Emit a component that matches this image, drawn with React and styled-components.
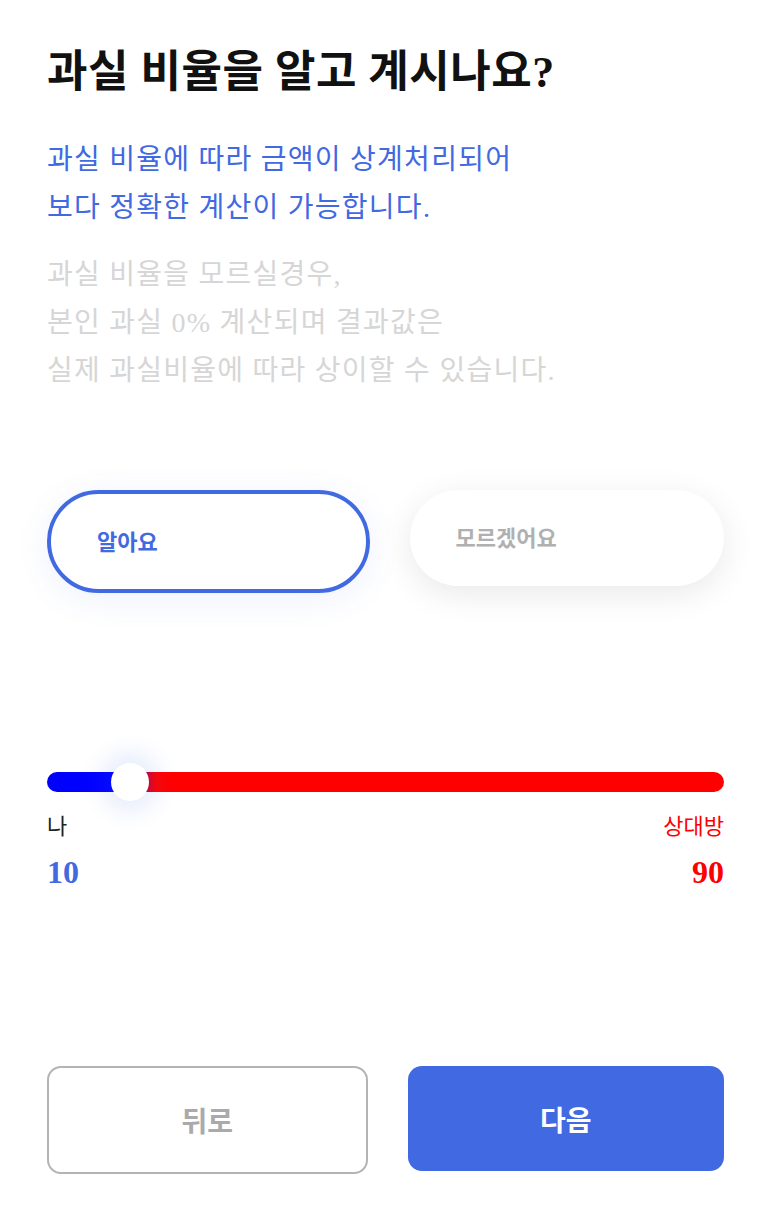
import React, { useState } from "react";
import styled, { createGlobalStyle } from "styled-components";

const Global = createGlobalStyle`
  html, body { margin: 0; padding: 0; background: #fff; }
  body { font-family: "Liberation Serif", "Noto Sans CJK KR", serif; }
  * { box-sizing: border-box; }
`;

const Page = styled.div`
  width: 773px;
  padding: 48px 49px 0 47px;
  display: flex;
  flex-direction: column;
`;

const Title = styled.h1`
  margin: 0;
  font-size: 44px;
  line-height: 50px;
  font-weight: 700;
  color: #111;
  letter-spacing: 0.5px;
`;

const Lead = styled.p`
  margin: ${(p) => p.$top} 0 0;
  font-size: 28px;
  line-height: 48px;
  font-weight: 400;
  letter-spacing: 1.25px;
  color: ${(p) => p.$color};
`;

const ChoiceRow = styled.div`
  margin-top: 95px;
  display: flex;
  gap: 40px;
  align-items: flex-start;
`;

const Choice = styled.button`
  flex: 1;
  height: ${(p) => (p.$active ? "103px" : "96px")};
  border-radius: 52px;
  border: ${(p) => (p.$active ? "4px solid #4169e1" : "none")};
  background: #fff;
  box-shadow: ${(p) =>
    p.$active
      ? "0 6px 34px rgba(65, 105, 225, 0.09)"
      : "0 8px 34px rgba(0, 0, 0, 0.09)"};
  padding: 0 0 4px 46px;
  text-align: left;
  font-family: inherit;
  font-size: 22px;
  font-weight: 700;
  color: ${(p) => (p.$active ? "#4169e1" : "#b0b0b0")};
  cursor: pointer;
`;

const SliderBlock = styled.div`
  margin-top: 179px;
  display: flex;
  flex-direction: column;
`;

const Range = styled.input`
  -webkit-appearance: none;
  appearance: none;
  width: 100%;
  height: 20px;
  margin: 0;
  border-radius: 10px;
  outline: none;
  background: linear-gradient(
    90deg,
    #0000ff 0%,
    #0000ff 10%,
    #ff0000 16%,
    #ff0000 100%
  );
  &::-webkit-slider-thumb {
    -webkit-appearance: none;
    appearance: none;
    width: 38px;
    height: 38px;
    border-radius: 50%;
    background: #fff;
    box-shadow: 0 0 20px 12px rgba(65, 105, 225, 0.11);
    cursor: pointer;
  }
`;

const SideRow = styled.div`
  display: flex;
  justify-content: space-between;
  margin-top: ${(p) => p.$gap};
`;

const SideLabel = styled.span`
  font-size: 22px;
  line-height: 28px;
  color: ${(p) => p.$color};
`;

const SideValue = styled.span`
  font-size: 32px;
  line-height: 36px;
  font-weight: 700;
  color: ${(p) => p.$color};
`;

const Footer = styled.div`
  margin-top: 176px;
  display: flex;
  gap: 40px;
  align-items: flex-start;
`;

const NavButton = styled.button`
  flex: 1;
  height: ${(p) => (p.$primary ? "105px" : "108px")};
  border-radius: 14px;
  border: ${(p) => (p.$primary ? "none" : "2px solid #b4b4b4")};
  background: ${(p) => (p.$primary ? "#4169e1" : "#fff")};
  color: ${(p) => (p.$primary ? "#fff" : "#aaaaaa")};
  font-family: inherit;
  font-size: 28px;
  font-weight: 700;
  cursor: pointer;
`;

export default function App() {
  const [know, setKnow] = useState(true);
  const [mine, setMine] = useState(10);
  return (
    <>
      <Global />
      <Page>
        <Title>과실 비율을 알고 계시나요?</Title>
        <Lead $color="#4169e1" $top="38px">
          과실 비율에 따라 금액이 상계처리되어
          <br />
          보다 정확한 계산이 가능합니다.
        </Lead>
        <Lead $color="#d6d6d6" $top="19px">
          과실 비율을 모르실경우,
          <br />
          본인 과실 0% 계산되며 결과값은
          <br />
          실제 과실비율에 따라 상이할 수 있습니다.
        </Lead>
        <ChoiceRow>
          <Choice $active={know} onClick={() => setKnow(true)}>
            알아요
          </Choice>
          <Choice $active={!know} onClick={() => setKnow(false)}>
            모르겠어요
          </Choice>
        </ChoiceRow>
        <SliderBlock>
          <Range
            type="range"
            min="0"
            max="100"
            value={mine}
            onChange={(e) => setMine(Number(e.target.value))}
          />
          <SideRow $gap="21px">
            <SideLabel $color="#222">나</SideLabel>
            <SideLabel $color="#ff0000">상대방</SideLabel>
          </SideRow>
          <SideRow $gap="13px">
            <SideValue $color="#4169e1">{mine}</SideValue>
            <SideValue $color="#ff0000">{100 - mine}</SideValue>
          </SideRow>
        </SliderBlock>
        <Footer>
          <NavButton>뒤로</NavButton>
          <NavButton $primary>다음</NavButton>
        </Footer>
      </Page>
    </>
  );
}
